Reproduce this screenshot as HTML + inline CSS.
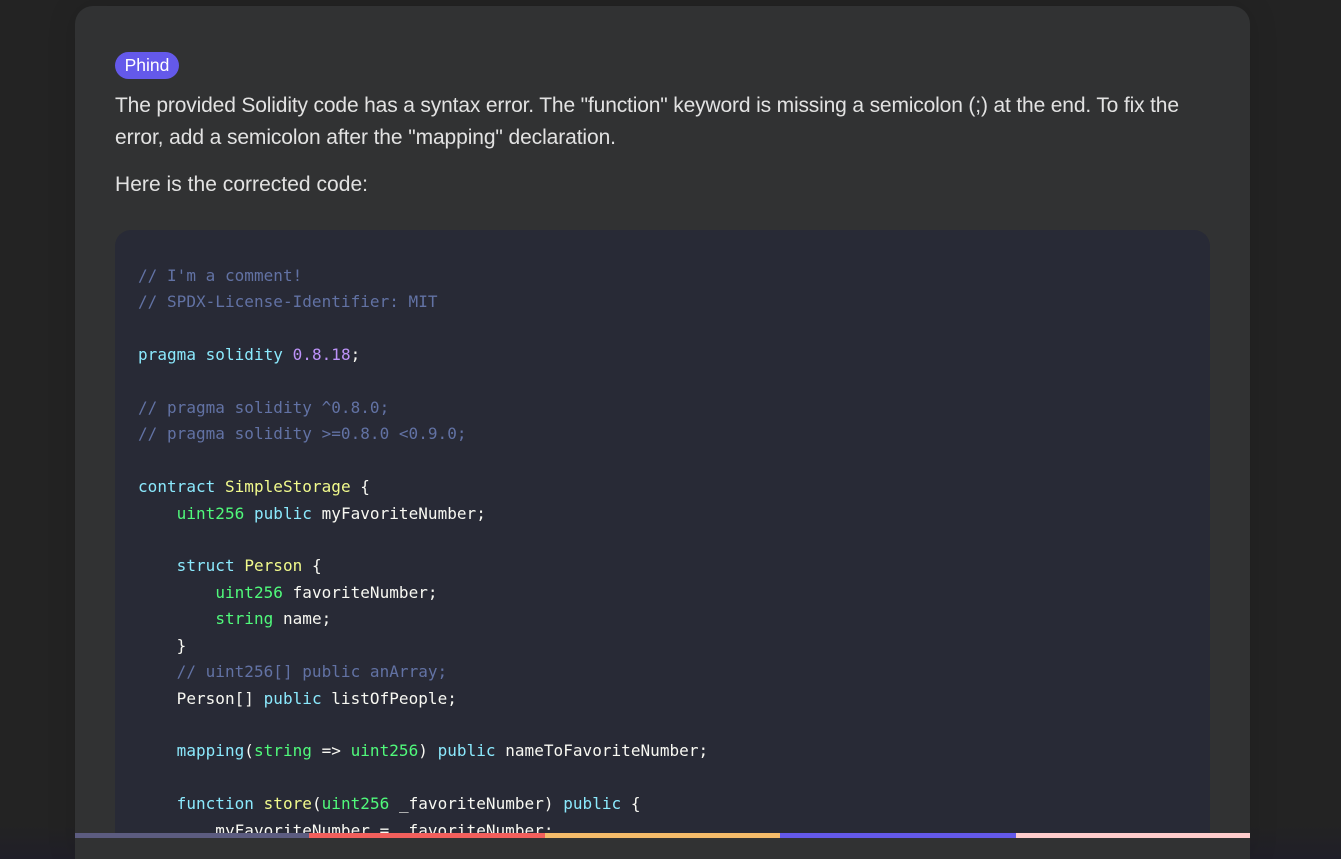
<!DOCTYPE html>
<html><head><meta charset="utf-8">
<style>
html,body{margin:0;padding:0;width:1341px;height:859px;overflow:hidden;background:#232323}
#bg{position:absolute;left:0;top:0;width:1341px;height:859px;background:linear-gradient(to bottom,#232323 0,#232323 825px,#201f28 859px)}
#card{position:absolute;left:75px;top:6px;width:1175px;height:853px;background:#313233;border-radius:18px 18px 0 0;box-shadow:0 0 30px rgba(0,0,0,.12)}
#wrap{position:absolute;left:0;top:0;width:1341px;height:859px;overflow:hidden}
#pill{position:absolute;left:115px;top:52px;width:64px;height:27px;border-radius:14px;background:#6459ea;color:#fff;font:17.5px/26px "Liberation Sans",sans-serif;text-align:center}
#code{position:absolute;left:115px;top:230px;width:1095px;height:603px;background:#282a36;border-radius:16px 16px 0 0;overflow:hidden}
pre{position:absolute;left:23px;top:33px;margin:0;font:16px/26.4px "DejaVu Sans Mono",monospace;letter-spacing:.03px;color:#f8f8f2}
.c{color:#6272a4}.k{color:#8be9fd}.t{color:#50fa7b}.y{color:#f1fa8c}.n{color:#bd93f9}
.bar{position:absolute;top:833px;height:5px}
svg{position:absolute;left:0;top:0}
svg text{font:21px "Liberation Sans",sans-serif;fill:#e2e2e2}
</style></head><body>
<div id="wrap">
<div id="bg"></div>
<div id="card"></div>
<div id="pill">Phind</div>
<svg width="1341" height="220">
<text x="115" y="112" textLength="1064" lengthAdjust="spacing">The provided Solidity code has a syntax error. The "function" keyword is missing a semicolon (;) at the end. To fix the</text>
<text x="115" y="144" textLength="501" lengthAdjust="spacing">error, add a semicolon after the "mapping" declaration.</text>
<text x="115" y="191" textLength="253" lengthAdjust="spacing">Here is the corrected code:</text>
</svg>
<div id="code"><pre><span class="c">// I'm a comment!
// SPDX-License-Identifier: MIT</span>

<span class="k">pragma solidity</span> <span class="n">0.8.18</span>;

<span class="c">// pragma solidity ^0.8.0;
// pragma solidity &gt;=0.8.0 &lt;0.9.0;</span>

<span class="k">contract</span> <span class="y">SimpleStorage</span> {
    <span class="t">uint256</span> <span class="k">public</span> myFavoriteNumber;

    <span class="k">struct</span> <span class="y">Person</span> {
        <span class="t">uint256</span> favoriteNumber;
        <span class="t">string</span> name;
    }
    <span class="c">// uint256[] public anArray;</span>
    Person[] <span class="k">public</span> listOfPeople;

    <span class="k">mapping</span>(<span class="t">string</span> =&gt; <span class="t">uint256</span>) <span class="k">public</span> nameToFavoriteNumber;

    <span class="k">function</span> <span class="y">store</span>(<span class="t">uint256</span> _favoriteNumber) <span class="k">public</span> {
        myFavoriteNumber = _favoriteNumber;
    }
}</pre></div>
<div class="bar" style="left:75px;width:234px;background:#5c5c80"></div>
<div class="bar" style="left:309px;width:236px;background:#f25f5c"></div>
<div class="bar" style="left:545px;width:235px;background:#f4bb6a"></div>
<div class="bar" style="left:780px;width:236px;background:#6459ea"></div>
<div class="bar" style="left:1016px;width:234px;background:#ffcccc"></div>
</div>
</body></html>
